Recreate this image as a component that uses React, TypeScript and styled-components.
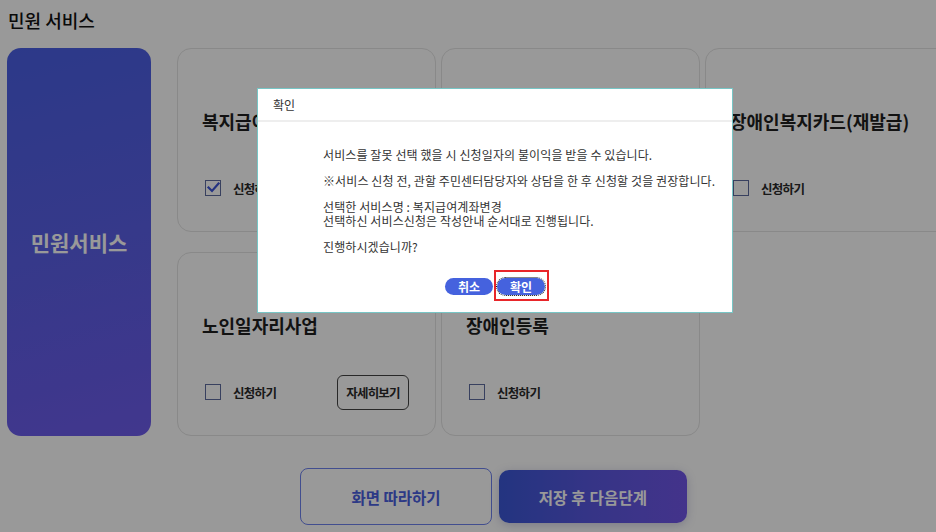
import React from "react";
import styled, { createGlobalStyle } from "styled-components";

const GlobalStyle = createGlobalStyle`
  html, body { margin: 0; padding: 0; overflow: hidden; background: #fff; }
  body { font-family: "Noto Sans CJK KR", "Noto Sans", sans-serif; color: #222; }
  * { box-sizing: border-box; }
`;

const Page = styled.div`
  width: 936px;
  height: 532px;
  padding: 6px 0 0 7px;
  overflow: hidden;
`;

const PageTitle = styled.h2`
  margin: 0 0 0 1px;
  font-size: 18px;
  font-weight: 500;
  line-height: 28px;
  letter-spacing: 0;
  color: #111;
`;

const Main = styled.div`
  display: flex;
  gap: 26px;
  margin-top: 14px;
`;

const SideCard = styled.div`
  flex: 0 0 144px;
  height: 388px;
  border-radius: 14px;
  background: linear-gradient(165deg, #4a5fe4 0%, #5a5fe6 50%, #6e5cec 100%);
  display: flex;
  align-items: center;
  justify-content: center;
  color: #fff;
  font-size: 21px;
  font-weight: 700;
  letter-spacing: 0;
`;

const Grid = styled.div`
  display: grid;
  grid-template-columns: repeat(3, 259px);
  grid-auto-rows: 184px;
  column-gap: 5px;
  row-gap: 20px;
`;

const Card = styled.div`
  border: 1px solid #e4e4e4;
  border-radius: 14px;
  padding: 55px 26px 0 24px;
  display: flex;
  flex-direction: column;
`;

const CardTitle = styled.div`
  font-size: 18px;
  font-weight: 700;
  line-height: 34px;
  letter-spacing: 0;
  color: #1e1e1e;
  white-space: nowrap;
`;

const CardRow = styled.div`
  margin-top: 32px;
  height: 36px;
  display: flex;
  align-items: center;
  padding-left: 3px;
`;

const Check = styled.span`
  width: 16px;
  height: 16px;
  border: 1.5px solid #5e6c9e;
  display: inline-flex;
  align-items: center;
  justify-content: center;
  flex: 0 0 auto;
`;

const CheckLabel = styled.span`
  margin-left: 12px;
  font-size: 12.5px;
  font-weight: 700;
  letter-spacing: -0.7px;
  color: #2a2a2a;
`;

const DetailButton = styled.button`
  margin-left: auto;
  width: 72px;
  height: 35px;
  border: 1.5px solid #444;
  border-radius: 6px;
  background: transparent;
  font-family: inherit;
  font-size: 12.5px;
  font-weight: 700;
  letter-spacing: -0.8px;
  color: #2a2a2a;
  padding: 0;
`;

const Footer = styled.div`
  display: flex;
  align-items: center;
  gap: 7px;
  margin-top: 32px;
  padding-left: 293px;
`;

const OutlineButton = styled.button`
  width: 192px;
  height: 57px;
  border: 1.5px solid #6f82ee;
  border-radius: 8px;
  background: #fff;
  color: #4a60e0;
  font-family: inherit;
  font-size: 15.5px;
  font-weight: 700;
  letter-spacing: 0;
`;

const PrimaryButton = styled.button`
  width: 188px;
  height: 53px;
  border: none;
  border-radius: 10px;
  background: linear-gradient(90deg, #3b58d6 0%, #5a58e0 50%, #7156e8 100%);
  color: #fff;
  font-family: inherit;
  font-size: 15.5px;
  font-weight: 700;
  letter-spacing: 0.2px;
  box-shadow: 0 2px 10px rgba(60, 60, 140, 0.25);
`;

const Overlay = styled.div`
  position: fixed;
  inset: 0;
  background: rgba(0, 0, 0, 0.4);
`;

const Dialog = styled.div`
  position: fixed;
  left: 257px;
  top: 88px;
  width: 476px;
  height: 225px;
  background: #fff;
  border: 1px solid #77c6c6;
  display: flex;
  flex-direction: column;
`;

const DialogHeader = styled.div`
  height: 33px;
  padding-left: 15px;
  display: flex;
  align-items: center;
  font-size: 12px;
  color: #333;
  border-bottom: 2px solid #eeeeee;
`;

const DialogBody = styled.div`
  padding: 26px 0 0 65px;
  font-size: 12px;
  line-height: 14px;
  letter-spacing: 0.1px;
  color: #333;
`;

const Para = styled.p`
  margin: 0 0 12px 0;
`;

const DialogActions = styled.div`
  display: flex;
  justify-content: center;
  gap: 4px;
  margin-top: 12px;
`;

const PillButton = styled.button<{ $focused?: boolean }>`
  position: relative;
  width: 48px;
  height: 17px;
  border: none;
  border-radius: 9px;
  background: #4562de;
  color: #fff;
  font-family: inherit;
  font-size: 12px;
  font-weight: 700;
  line-height: 17px;
  padding: 0;
  outline: ${(p) => (p.$focused ? "1px dotted #111" : "none")};
  outline-offset: 0;
`;

const RedMark = styled.span`
  position: absolute;
  left: -3px;
  top: -8px;
  width: 55px;
  height: 31px;
  border: 2px solid #e8262a;
  pointer-events: none;
`;

const CheckMark = () => (
  <svg width="14" height="14" viewBox="0 0 14 14">
    <path d="M2.5 6.5 L6 10 L12.5 2.5" fill="none" stroke="#3d55d8" strokeWidth="2.2" strokeLinecap="square" />
  </svg>
);

type CardData = { id: string; title?: string; checked?: boolean; detail?: boolean };

const cards: CardData[] = [
  { id: "a", title: "복지급여계좌변경", checked: true },
  { id: "b" },
  { id: "c", title: "장애인복지카드(재발급)" },
  { id: "d", title: "노인일자리사업", detail: true },
  { id: "e", title: "장애인등록" },
];

export default function App() {
  return (
    <>
      <GlobalStyle />
      <Page>
        <PageTitle>민원 서비스</PageTitle>
        <Main>
          <SideCard>민원서비스</SideCard>
          <Grid>
            {cards.map((c) => (
              <Card key={c.id}>
                {c.title && (
                  <>
                    <CardTitle>{c.title}</CardTitle>
                    <CardRow>
                      <Check>{c.checked && <CheckMark />}</Check>
                      <CheckLabel>신청하기</CheckLabel>
                      {c.detail && <DetailButton>자세히보기</DetailButton>}
                    </CardRow>
                  </>
                )}
              </Card>
            ))}
          </Grid>
        </Main>
        <Footer>
          <OutlineButton>화면 따라하기</OutlineButton>
          <PrimaryButton>저장 후 다음단계</PrimaryButton>
        </Footer>
      </Page>
      <Overlay />
      <Dialog>
        <DialogHeader>확인</DialogHeader>
        <DialogBody>
          <Para>서비스를 잘못 선택 했을 시 신청일자의 불이익을 받을 수 있습니다.</Para>
          <Para>※서비스 신청 전, 관할 주민센터담당자와 상담을 한 후 신청할 것을 권장합니다.</Para>
          <Para>
            선택한 서비스명 : 복지급여계좌변경
            <br />
            선택하신 서비스신청은 작성안내 순서대로 진행됩니다.
          </Para>
          <Para>진행하시겠습니까?</Para>
        </DialogBody>
        <DialogActions>
          <PillButton>취소</PillButton>
          <PillButton $focused>
            확인
            <RedMark />
          </PillButton>
        </DialogActions>
      </Dialog>
    </>
  );
}
